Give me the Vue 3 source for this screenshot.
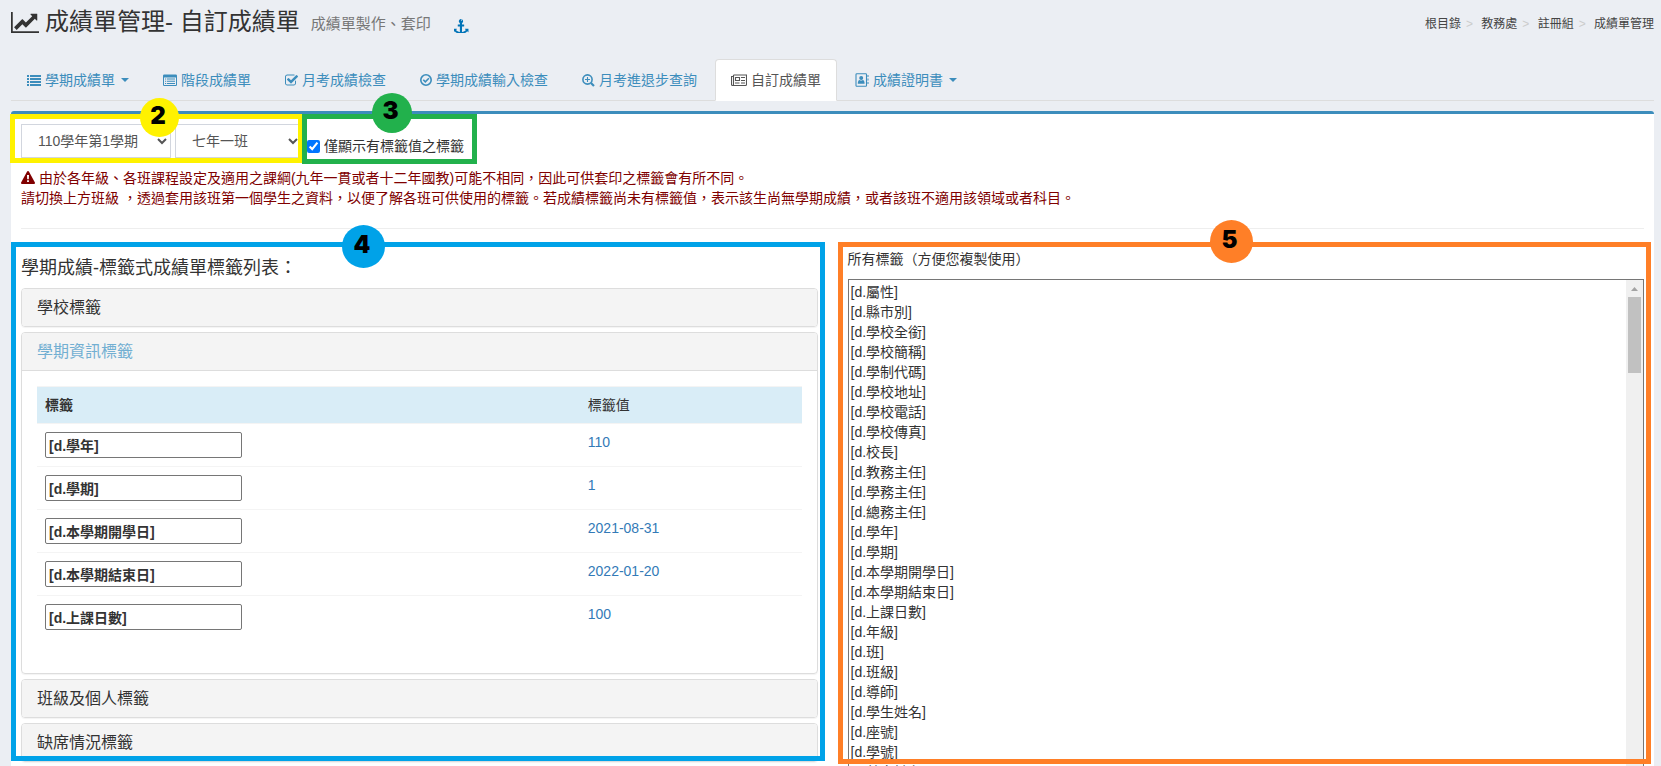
<script setup>
import { ref } from 'vue'

const crumbs = ['根目錄', '教務處', '註冊組', '成績單管理']

const tabs = [
  { icon: 'list', label: '學期成績單', caret: true },
  { icon: 'table', label: '階段成績單' },
  { icon: 'checkSquare', label: '月考成績檢查' },
  { icon: 'checkCircle', label: '學期成績輸入檢查' },
  { icon: 'zoom', label: '月考進退步查詢' },
  { icon: 'news', label: '自訂成績單', active: true },
  { icon: 'book', label: '成績證明書', caret: true },
]

const onlyFilled = ref(true)

const panels = [
  { title: '學校標籤' },
  {
    title: '學期資訊標籤',
    rows: [
      ['[d.學年]', '110'],
      ['[d.學期]', '1'],
      ['[d.本學期開學日]', '2021-08-31'],
      ['[d.本學期結束日]', '2022-01-20'],
      ['[d.上課日數]', '100'],
    ],
  },
  { title: '班級及個人標籤' },
  { title: '缺席情況標籤' },
]

const allTags = [
  '屬性', '縣市別', '學校全銜', '學校簡稱', '學制代碼', '學校地址', '學校電話', '學校傳真',
  '校長', '教務主任', '學務主任', '總務主任', '學年', '學期', '本學期開學日', '本學期結束日',
  '上課日數', '年級', '班', '班級', '導師', '學生姓名', '座號', '學號', '英文姓名',
].map((t) => `[d.${t}]`).join('\n')
</script>

<template>
  <div class="page">
    <header class="header">
      <h1>
        <svg class="chart" viewBox="0 128 2048 1536" aria-hidden="true"><path d="M2048 1536v128h-2048v-1536h128v1408h1920zm-128-1248v435q0 21-19.5 29.5t-35.5-7.5l-121-121-633 633q-10 10-23 10t-23-10l-233-233-416 416-192-192 585-585q10-10 23-10t23 10l233 233 464-464-121-121q-16-16-7.5-35.5t29.5-19.5h435q14 0 23 9t9 23z" /></svg>
        <span>成績單管理- 自訂成績單</span>
        <small>成績單製作、套印</small>
        <a href="#" class="anchor" aria-label="錨點">
          <svg viewBox="0 0 1792 1792"><path d="M960 256q0-26-19-45t-45-19-45 19-19 45 19 45 45 19 45-19 19-45zm768 1056v352q0 22-20 30-8 2-12 2-12 0-23-9l-93-93q-119 143-318.5 226.5t-429.5 83.5-429.5-83.5-318.5-226.5l-93 93q-9 9-23 9-4 0-12-2-20-8-20-30v-352q0-14 9-23t23-9h352q22 0 30 20 8 19-7 35l-100 100q67 91 189.5 153.5t271.5 82.5v-647h-192q-26 0-45-19t-19-45v-128q0-26 19-45t45-19h192v-163q-58-34-93-92.5t-35-128.5q0-106 75-181t181-75 181 75 75 181q0 70-35 128.5t-93 92.5v163h192q26 0 45 19t19 45v128q0 26-19 45t-45 19h-192v647q149-20 271.5-82.5t189.5-153.5l-100-100q-15-16-7-35 8-20 30-20h352q14 0 23 9t9 23z" /></svg>
        </a>
      </h1>
      <ol class="crumbs">
        <li v-for="c in crumbs" :key="c"><a href="#">{{ c }}</a></li>
      </ol>
    </header>

    <nav class="tabs">
      <a v-for="t in tabs" :key="t.label" href="#" :class="['tab', { active: t.active }]">
        <svg v-if="t.icon === 'list'" class="ic" viewBox="0 0 14 14"><path d="M0 2h2v2H0zM3 2h11v2H3zM0 5h2v2H0zM3 5h11v2H3zM0 8h2v2H0zM3 8h11v2H3zM0 11h2v2H0zM3 11h11v2H3z" /></svg>
        <svg v-else-if="t.icon === 'table'" class="ic" viewBox="0 0 14 14"><path fill-rule="evenodd" d="M1.200 1.500h11.600A1.200 1.200 0 0 1 14 2.700v9.100A1.200 1.200 0 0 1 12.800 13H1.200A1.200 1.200 0 0 1 0 11.800V2.700A1.200 1.200 0 0 1 1.200 1.500zM1 4.500V12h12V4.500zM2 5.500h1.200v1H2zM4 5.500h8v1H4zM2 7.700h1.200v1H2zM4 7.700h8v1H4zM2 9.900h1.200v1H2zM4 9.900h8v1H4z" /></svg>
        <svg v-else-if="t.icon === 'checkSquare'" class="ic narrow" viewBox="64 64 1664 1664"><path d="M1472 930v318q0 119-84.500 203.500t-203.500 84.500h-832q-119 0-203.500-84.500t-84.500-203.500v-832q0-119 84.500-203.500t203.500-84.500h832q63 0 117 25 15 7 18 23 3 17-9 29l-49 49q-10 10-23 10-3 0-9-2-23-6-45-6h-832q-66 0-113 47t-47 113v832q0 66 47 113t113 47h832q66 0 113-47t47-113v-254q0-13 9-22l64-64q10-10 23-10 6 0 12 3 20 8 20 29zm231-489l-814 814q-24 24-57 24t-57-24l-430-430q-24-24-24-57t24-57l110-110q24-24 57-24t57 24l263 263 647-647q24-24 57-24t57 24l110 110q24 24 24 57t-24 57z" /></svg>
        <svg v-else-if="t.icon === 'checkCircle'" class="ic small" viewBox="0 0 12 12"><circle cx="6" cy="6" r="5.200" class="line thick" /><path d="M3.300 5.800l2 2 3.600-3.600" class="line thick" /></svg>
        <svg v-else-if="t.icon === 'zoom'" class="ic narrow" viewBox="0 0 13 13"><circle cx="5.500" cy="5.500" r="4.600" class="line thick" /><path d="M9 9l3 3" class="line bold" /><path d="M5.500 3v5M3 5.500h5" class="line" /></svg>
        <svg v-else-if="t.icon === 'news'" class="ic wide" viewBox="0 0 16 14"><path class="line" d="M2.500 2h13v9.500q0 1-1 1H1.500q-1 0-1-1V3.500h2M2.500 2v9.500q0 1-1 1" /><path class="line" d="M4.500 4.500h4v3h-4zM10 4.500h4M10 7.500h4M4 10h4.500M10 10h4" /></svg>
        <svg v-else class="ic" viewBox="0 0 14 14"><rect x="1" y="0.700" width="10.500" height="12.600" rx="0.800" class="line" /><path d="M12.500 2h1v2h-1zM12.500 5.500h1v2h-1zM12.500 9h1v2h-1z" /><circle cx="6.200" cy="5" r="2" /><path d="M2.800 10.800q0-3.600 1.800-3.900 1.600 1.100 3.200 0 1.800.3 1.800 3.900z" /></svg>
        <span>{{ t.label }}</span>
        <i v-if="t.caret" class="caret"></i>
      </a>
    </nav>

    <main class="box">
      <div class="filters">
        <div class="selects">
          <select class="term" aria-label="學期"><option>110學年第1學期</option></select>
          <select class="class" aria-label="班級"><option>七年一班</option></select>
          <div class="frame yellow"><b class="bubble">2</b></div>
        </div>
        <div class="only">
          <label><input v-model="onlyFilled" type="checkbox" /><span>僅顯示有標籤值之標籤</span></label>
          <div class="frame green"><b class="bubble">3</b></div>
        </div>
      </div>

      <p class="warn">
        <svg viewBox="0 0 14 13" aria-hidden="true"><path fill-rule="evenodd" d="M7 0q.6 0 .9.500l6 11q.5 1.300-.9 1.500H1q-1.400-.2-.9-1.500l6-11Q6.400 0 7 0zM6 4l.2 4.200h1.600L8 4zM6.100 9.300v1.800h1.800V9.300z" /></svg>
        由於各年級、各班課程設定及適用之課綱(九年一貫或者十二年國教)可能不相同，因此可供套印之標籤會有所不同。<br />
        請切換上方班級 ，透過套用該班第一個學生之資料，以便了解各班可供使用的標籤。若成績標籤尚未有標籤值，表示該生尚無學期成績，或者該班不適用該領域或者科目。
      </p>
      <hr />

      <div class="columns">
        <section class="column">
          <h4>學期成績-標籤式成績單標籤列表：</h4>
          <article v-for="p in panels" :key="p.title" class="panel">
            <h5 :class="{ open: p.rows }"><a href="#">{{ p.title }}</a></h5>
            <div v-if="p.rows" class="body">
              <table>
                <thead>
                  <tr><th>標籤</th><td>標籤值</td></tr>
                </thead>
                <tbody>
                  <tr v-for="r in p.rows" :key="r[0]">
                    <th><input type="text" :value="r[0]" :aria-label="r[0]" readonly /></th>
                    <td>{{ r[1] }}</td>
                  </tr>
                </tbody>
              </table>
            </div>
          </article>
          <div class="frame blue"><b class="bubble">4</b></div>
        </section>

        <section class="column">
          <label class="all" for="all-tags">所有標籤（方便您複製使用）</label>
          <div class="area">
            <textarea id="all-tags" :value="allTags" readonly></textarea>
            <div class="scroll" aria-hidden="true">
              <svg viewBox="0 0 17 17"><path d="M5 11l3.500-4 3.500 4z" /></svg>
              <div class="thumb"></div>
            </div>
          </div>
          <div class="frame orange"><b class="bubble">5</b></div>
        </section>
      </div>
    </main>
  </div>
</template>

<style>
body {
  background: #ebeef3;
}
</style>

<style scoped>
* {
  box-sizing: border-box;
}
.page {
  display: flex;
  flex-direction: column;
  height: 100vh;
  overflow: hidden;
  padding: 0 7px 0 11px;
  background: #ebeef3;
  color: #333;
  font: 14px/20px "Liberation Sans", Arial, "Noto Sans CJK TC", sans-serif;
}
a {
  color: inherit;
  text-decoration: none;
}
svg {
  flex: none;
  fill: currentColor;
}
.header {
  display: flex;
  justify-content: space-between;
  align-items: center;
  height: 44px;
  flex: none;
}
h1 {
  display: flex;
  align-items: center;
  margin: 0;
  font-size: 24px;
  font-weight: 400;
  line-height: 28px;
}
.chart {
  width: 28px;
  height: 21px;
  margin-right: 6px;
}
small {
  margin: 4px 23px 0 11px;
  font-size: 15px;
  line-height: 20px;
  color: #777;
}
.anchor {
  display: flex;
  margin-top: 6px;
  color: #0073b7;
}
.anchor svg {
  width: 15px;
  height: 15px;
}
.crumbs {
  display: flex;
  margin: 0;
  padding: 4px 0 0;
  list-style: none;
  font-size: 12px;
  color: #444;
}
.crumbs li + li::before {
  content: ">\00a0";
  padding: 0 5px;
  color: #ccc;
}
.tabs {
  display: flex;
  gap: 2px;
  flex: none;
  margin: 15px 0 10px;
  border-bottom: 1px solid #ddd;
}
.tab {
  display: flex;
  align-items: center;
  gap: 4px;
  height: 42px;
  margin-bottom: -1px;
  padding: 0 15px;
  border: 1px solid transparent;
  border-radius: 4px 4px 0 0;
  color: #3c8dbc;
}
.tab.active {
  background: #fff;
  border-color: #ddd #ddd #fff;
  color: #555;
}
.ic {
  width: 14px;
  height: 14px;
}
.ic.narrow {
  width: 13px;
  height: 13px;
}
.ic.small {
  width: 12px;
  height: 12px;
}
.ic.wide {
  width: 16px;
}
.line {
  fill: none;
  stroke: currentColor;
  stroke-width: 1.1;
}
.line.thick {
  stroke-width: 1.6;
}
.line.bold {
  stroke-width: 2.2;
}
.caret {
  margin-left: 2px;
  border: 4px solid transparent;
  border-top-color: currentColor;
  border-bottom: 0;
}
.box {
  flex: 1 0 auto;
  padding: 10px;
  border-top: 3px solid #3c8dbc;
  border-radius: 3px;
  background: #fff;
}
.filters {
  display: flex;
  align-items: flex-end;
  gap: 5px;
}
.selects {
  position: relative;
  display: flex;
  gap: 4px;
}
select {
  height: 34px;
  padding: 6px 12px;
  border: 1px solid #d2d6de;
  border-radius: 0;
  background: #fff;
  color: #555;
  font: inherit;
}
.term {
  width: 150px;
}
.class {
  width: 127px;
}
.only {
  position: relative;
  padding-bottom: 2px;
}
.only label {
  display: flex;
  align-items: center;
  gap: 4px;
}
.only input {
  width: 13px;
  height: 13px;
  margin: 0;
  accent-color: #0075ff;
}
.warn {
  margin: 10px 0 20px;
  color: #800000;
}
.warn svg {
  width: 14px;
  height: 13px;
  vertical-align: -1px;
}
hr {
  margin: 0 0 20px;
  border: 0;
  border-top: 1px solid #eee;
}
.columns {
  display: grid;
  grid-template-columns: 1fr 1fr;
  gap: 30px;
}
.column {
  position: relative;
  min-width: 0;
}
h4 {
  margin: 9px 0 10px;
  font-size: 18px;
  font-weight: 400;
  line-height: 20px;
}
.panel {
  margin-bottom: 5px;
  border: 1px solid #ddd;
  border-radius: 4px;
  box-shadow: 0 1px 1px rgba(0, 0, 0, 0.05);
}
h5 {
  margin: 0;
  padding: 9px 15px;
  border-radius: 3px;
  background: #f4f4f4;
  font-size: 16px;
  font-weight: 400;
  line-height: 19px;
}
h5.open {
  border-bottom: 1px solid #ddd;
  border-radius: 3px 3px 0 0;
  color: #72afd2;
}
.body {
  padding: 15px;
}
table {
  width: 100%;
  margin-bottom: 20px;
  border-collapse: separate;
  border-spacing: 0;
  table-layout: fixed;
}
th,
td {
  padding: 8px;
  border-top: 1px solid #f4f4f4;
  text-align: left;
  vertical-align: top;
}
th {
  width: 71%;
}
thead th,
thead td {
  background: #d9edf7;
}
tbody td {
  color: #337ab7;
}
th input {
  display: block;
  width: 197px;
  height: 26px;
  padding: 0 3px 1px;
  border: 1px solid #767676;
  border-radius: 2px;
  background: #fff;
  color: inherit;
  font: inherit;
}
.all {
  display: block;
  margin-bottom: 10px;
}
.area {
  position: relative;
}
textarea {
  display: block;
  width: 100%;
  height: 520px;
  padding: 2px;
  border: 1px solid #767676;
  background: #fff;
  color: inherit;
  font: inherit;
  resize: none;
  scrollbar-width: none;
}
.scroll {
  position: absolute;
  inset: 1px 1px 1px auto;
  width: 17px;
  background: #f0f0f0;
}
.scroll svg {
  display: block;
  width: 17px;
  height: 17px;
  color: #a3a3a3;
}
.thumb {
  width: 13px;
  height: 76px;
  margin: 0 2px;
  background: #c1c1c1;
}
/* Numbered highlight frames lie over the regions they mark. */
.frame {
  position: absolute;
  border: 5px solid;
  pointer-events: none;
}
.bubble {
  position: absolute;
  display: flex;
  align-items: center;
  justify-content: center;
  width: 43px;
  height: 43px;
  padding: 0 3px 4px 0;
  border-radius: 50%;
  color: #000;
  font: 900 24px/24px Inter, "Liberation Sans", sans-serif;
}
.yellow {
  inset: -10px -1px -5px -11px;
  border-color: #fff200;
}
.yellow .bubble {
  top: -21px;
  left: 125px;
  width: 39px;
  height: 39px;
  background: #fff200;
}
.green {
  inset: -22px -13px -6px -5px;
  z-index: 1;
  border-color: #22b14c;
}
.green .bubble {
  top: -26px;
  left: 65px;
  width: 40px;
  height: 40px;
  background: #22b14c;
}
.blue {
  inset: -7px -7px auto -10px;
  height: 519px;
  border-color: #00a2e8;
}
.blue .bubble {
  top: -22px;
  left: 326px;
  background: #00a2e8;
}
.orange {
  inset: -7px -7px auto -10px;
  height: 522px;
  border-color: #ff7f27;
}
.orange .bubble {
  top: -27px;
  left: 367px;
  background: #ff7f27;
}
</style>
